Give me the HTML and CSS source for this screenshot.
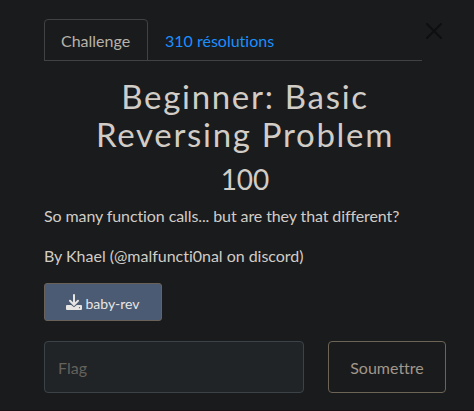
FILE: index.html
```html
<!DOCTYPE html>
<html lang="fr">
<head>
<meta charset="utf-8">
<title>Challenge</title>
<link rel="stylesheet" href="styles.css">
</head>
<body>
<main class="modal">
  <header class="top">
    <nav class="tabs">
      <a class="tab active">Challenge</a>
      <a class="tab">310 résolutions</a>
    </nav>
    <button class="close" aria-label="Fermer"><svg viewBox="0 0 16 16" width="16" height="16"><path d="M1 1L15 15M15 1L1 15"/></svg></button>
  </header>
  <h2 class="name">Beginner: Basic<br>Reversing Problem</h2>
  <h3 class="value">100</h3>
  <p class="desc intro">So many function calls... but are they that different?</p>
  <p class="desc author">By Khael (@malfuncti0nal on discord)</p>
  <a class="file"><svg viewBox="0 0 16 16" width="16" height="16"><path class="tray" d="M1 11h4.200L8 13.300 10.800 11H15a1 1 0 0 1 1 1v3a1 1 0 0 1-1 1H1a1 1 0 0 1-1-1v-3a1 1 0 0 1 1-1z"/><path class="arrow" d="M8 1v9.500M4 6.800l4 4 4-4"/><circle class="led" cx="13.500" cy="13.700" r=".6"/></svg><span>baby-rev</span></a>
  <form class="submit">
    <input class="flag" type="text" placeholder="Flag">
    <button class="send" type="button">Soumettre</button>
  </form>
</main>
</body>
</html>
```
FILE: styles.css
```css
* { box-sizing: border-box; }
body {
  margin: 0;
  height: 411px;
  overflow: hidden;
  border-bottom: 1px solid #1c1214;
  background: #1a1b1d;
  color: #d1cdc6;
  font: 16px/24px Lato, sans-serif;
  font-variant-ligatures: none;
}
.modal { padding: 19px 28px 0 44px; }
.top { display: flex; align-items: flex-start; }
.tabs {
  display: flex;
  width: 378px;
  height: 42px;
  border-bottom: 1px solid #404346;
}
.tab {
  height: 42px;
  padding: 9px 16px 0;
  border: 1px solid transparent;
  border-radius: 4px 4px 0 0;
  color: #1a8fff;
  white-space: nowrap;
}
.tab.active {
  width: 104px;
  border-color: #404346;
  color: #b8b2a8;
}
.close {
  display: flex;
  margin: 4px 0 0 4px;
  padding: 0;
  border: 0;
  background: none;
}
.close path { fill: none; stroke: #0e0f10; stroke-width: 2; stroke-linecap: round; }
.name {
  margin: 16px 0 0;
  font-size: 33px;
  font-weight: 400;
  line-height: 38.4px;
  letter-spacing: 1.7px;
  text-align: center;
}
.value {
  margin: 8px 0 0;
  font-size: 28px;
  font-weight: 400;
  line-height: 34px;
  text-align: center;
}
.desc { margin: 8px 0 16px; white-space: nowrap; }
.intro { letter-spacing: -.1px; }
.author { margin: 0 0 15px; letter-spacing: -.02px; }
.file {
  display: flex;
  align-items: center;
  justify-content: center;
  gap: 3px;
  width: 118px;
  height: 38px;
  border: 1px solid #6a6259;
  border-radius: 3px;
  background: #4b5b73;
  color: #e8e6e3;
  font-size: 14px;
}
.file span { padding-top: 4px; }
.tray { fill: #e8e6e3; }
.arrow { fill: none; stroke: #e8e6e3; stroke-width: 2; stroke-linecap: round; }
.led { fill: #4b5b73; }
.submit { display: flex; gap: 24px; margin: 20px 0 0; }
.flag, .send {
  height: 52px;
  border: 1px solid #3b4348;
  border-radius: 4px;
  font: 16px/24px Lato, sans-serif;
}
.flag { width: 260px; padding: 2px 13px 0; background: #202427; color: #d5d1ca; }
.flag::placeholder { color: #65615b; opacity: 1; }
.send { width: 118px; padding: 2px 0 0; border-color: #6c6454; background: none; color: #a0978a; font-variant-ligatures: none; }
```
